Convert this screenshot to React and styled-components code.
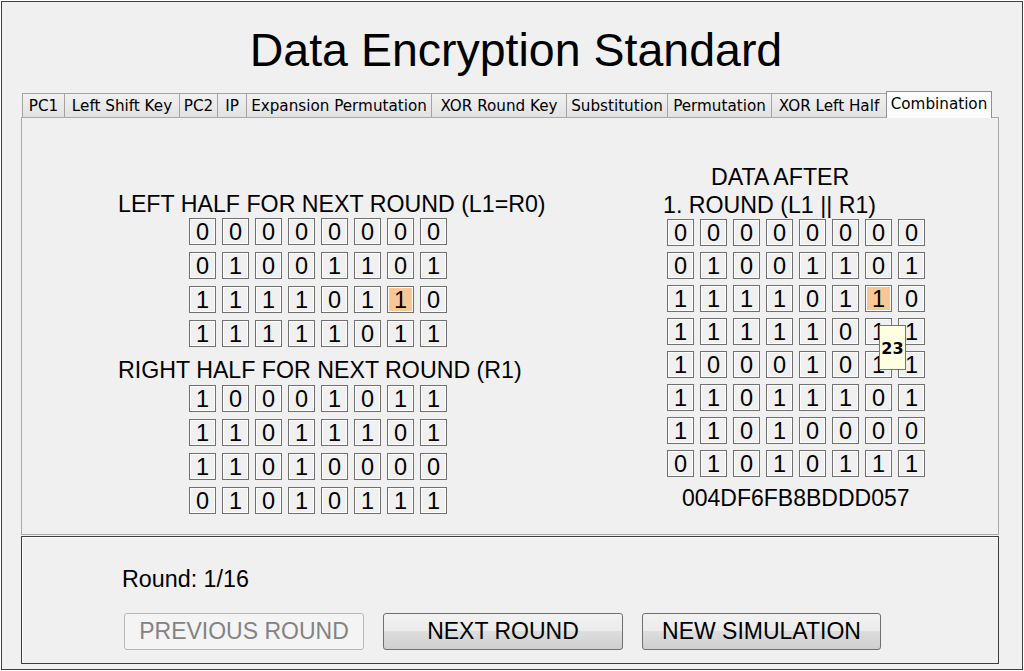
import React from "react";
import styled, { createGlobalStyle } from "styled-components";

const GlobalStyle = createGlobalStyle`
  body {
    margin: 0;
    background: #ffffff;
    font-family: "Liberation Sans", Arial, sans-serif;
  }
`;

const Window = styled.div`
  box-sizing: border-box;
  margin: 1px 0 0 1px;
  width: 1022px;
  height: 669px;
  border: 1px solid #3f3f3f;
  background: #f0f0f0;
  color: #000;
`;

const Title = styled.h1`
  margin: 20px 0 0;
  padding-left: 8px;
  font-weight: normal;
  font-size: 46.5px;
  line-height: 56px;
  text-align: center;
`;

const Body = styled.div`
  padding-left: 19px;
`;

const TabRow = styled.div`
  display: flex;
  align-items: flex-end;
  height: 26px;
  margin-top: 13px;
  padding-left: 1px;
`;

const Tab = styled.div`
  box-sizing: border-box;
  position: relative;
  display: flex;
  align-items: center;
  justify-content: center;
  width: ${(p) => p.$w}px;
  height: ${(p) => (p.$active ? 27 : 24)}px;
  margin-left: ${(p) => (p.$first ? 0 : -1)}px;
  margin-bottom: ${(p) => (p.$active ? -1 : 0)}px;
  padding-bottom: ${(p) => (p.$active ? 3 : 0)}px;
  border: 1px solid ${(p) => (p.$active ? "#8e9096" : "#a3a3a3")};
  border-bottom: none;
  background: ${(p) =>
    p.$active ? "#fcfcfc" : "linear-gradient(#f1f1f1, #e2e2e2)"};
  z-index: ${(p) => (p.$active ? 2 : 1)};
  font-family: "DejaVu Sans", Tahoma, sans-serif;
  font-size: 15.2px;
  white-space: nowrap;
`;

const Panel = styled.div`
  box-sizing: border-box;
  display: flex;
  width: 978px;
  height: 418px;
  padding-left: 96px;
  border: 1px solid #a9a9a9;
  background: #f0f0f0;
`;

const LeftCol = styled.div`
  width: 545px;
  padding-top: 72px;
`;

const RightCol = styled.div`
  padding-top: 45px;
`;

const Label = styled.div`
  font-size: ${(p) => p.$fs || 23.2}px;
  line-height: 28px;
  white-space: nowrap;
  margin-top: ${(p) => p.$mt || 0}px;
  margin-bottom: ${(p) => p.$mb || 0}px;
  padding-left: ${(p) => p.$pl || 0}px;
`;

const GridWrap = styled.div`
  position: relative;
  margin-left: ${(p) => p.$ml}px;
  width: max-content;
`;

const Grid = styled.div`
  display: grid;
  grid-template-columns: repeat(8, 27px);
  column-gap: 6px;
  row-gap: ${(p) => p.$rowGap}px;
`;

const Cell = styled.div`
  box-sizing: border-box;
  width: 27px;
  height: 27px;
  padding-top: 2px;
  border: 1px solid #707070;
  box-shadow: inset 0 0 0 1px #fdfdfd;
  background: ${(p) => (p.$hl ? "#f9c796" : "#f0f0f0")};
  font-size: 23.5px;
  line-height: 23px;
  text-align: center;
`;

const Tooltip = styled.div`
  box-sizing: border-box;
  position: absolute;
  left: 212px;
  top: 106px;
  width: 27px;
  height: 45px;
  padding-top: 14px;
  border: 1px solid #767676;
  background: #ffffe1;
  font-family: "DejaVu Sans", Tahoma, sans-serif;
  font-weight: bold;
  font-size: 16px;
  line-height: 18px;
  text-align: center;
  z-index: 3;
`;

const Footer = styled.div`
  box-sizing: border-box;
  width: 978px;
  height: 128px;
  margin-top: 1px;
  padding: 29px 0 0 102px;
  border: 1px solid #3c3c3c;
  box-shadow: inset 1px 1px 0 #ffffff;
`;

const RoundLabel = styled.div`
  margin-left: -2px;
  font-size: 23.3px;
  line-height: 26px;
`;

const ButtonRow = styled.div`
  display: flex;
  gap: 19px;
  margin-top: 21px;
`;

const Button = styled.button`
  box-sizing: border-box;
  width: ${(p) => p.$w}px;
  height: 37px;
  padding: 0;
  border: 1px solid ${(p) => (p.disabled ? "#b5b9bc" : "#707070")};
  border-radius: 3px;
  background: ${(p) =>
    p.disabled
      ? "#f4f4f4"
      : "linear-gradient(#f2f2f2, #ebebeb 50%, #dddddd 50%, #cfcfcf)"};
  color: ${(p) => (p.disabled ? "#838383" : "#000")};
  font-family: "Liberation Sans", Arial, sans-serif;
  font-size: 23px;
`;

const tabs = [
  ["PC1", 43],
  ["Left Shift Key", 116],
  ["PC2", 39],
  ["IP", 30],
  ["Expansion Permutation", 186],
  ["XOR Round Key", 136],
  ["Substitution", 102],
  ["Permutation", 105],
  ["XOR Left Half", 116],
  ["Combination", 106],
];

const rows = [
  "00000000",
  "01001101",
  "11110110",
  "11111011",
  "10001011",
  "11011101",
  "11010000",
  "01010111",
];

const BitGrid = ({ data, rowGap, ml, startRow, children }) => (
  <GridWrap $ml={ml}>
    <Grid $rowGap={rowGap}>
      {data.map((row, r) =>
        row.split("").map((b, c) => (
          <Cell key={r + "-" + c} $hl={startRow + r === 2 && c === 6}>
            {b}
          </Cell>
        ))
      )}
    </Grid>
    {children}
  </GridWrap>
);

const App = () => (
  <>
    <GlobalStyle />
    <Window>
      <Title>Data Encryption Standard</Title>
      <Body>
        <TabRow>
          {tabs.map(([name, w], i) => (
            <Tab key={name} $w={w} $first={i === 0} $active={name === "Combination"}>
              {name}
            </Tab>
          ))}
        </TabRow>
        <Panel>
          <LeftCol>
            <Label $mb={0}>LEFT HALF FOR NEXT ROUND (L1=R0)</Label>
            <BitGrid data={rows.slice(0, 4)} rowGap={7} ml={71} startRow={0} />
            <Label $mt={9} $mb={1}>RIGHT HALF FOR NEXT ROUND (R1)</Label>
            <BitGrid data={rows.slice(4)} rowGap={7} ml={71} startRow={4} />
          </LeftCol>
          <RightCol>
            <Label $pl={48}>DATA AFTER</Label>
            <Label>1. ROUND (L1 || R1)</Label>
            <BitGrid data={rows} rowGap={6} ml={4} startRow={0}>
              <Tooltip>23</Tooltip>
            </BitGrid>
            <Label $mt={7} $pl={19} $fs={23}>004DF6FB8BDDD057</Label>
          </RightCol>
        </Panel>
        <Footer>
          <RoundLabel>Round: 1/16</RoundLabel>
          <ButtonRow>
            <Button $w={240} disabled>PREVIOUS ROUND</Button>
            <Button $w={240}>NEXT ROUND</Button>
            <Button $w={239}>NEW SIMULATION</Button>
          </ButtonRow>
        </Footer>
      </Body>
    </Window>
  </>
);

export default App;
